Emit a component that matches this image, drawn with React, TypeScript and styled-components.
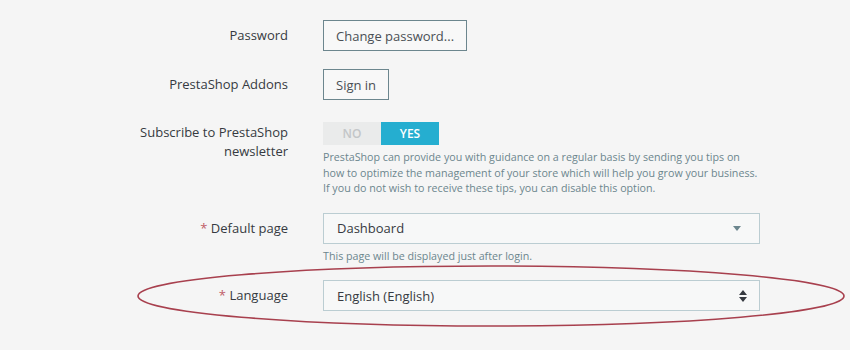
import React from 'react'
import styled, { createGlobalStyle } from 'styled-components'

const GlobalStyle = createGlobalStyle`
  html, body {
    margin: 0;
    padding: 0;
    background: #f5f5f5;
  }
  body {
    font-family: 'Open Sans', 'Liberation Sans', sans-serif;
    color: #363a41;
  }
`

type RowProps = { $gap: number }

const App: React.FunctionComponent = () => {
  return (
    <StyledPage>
      <GlobalStyle />
      <StyledForm>
        <StyledRow $gap={18}>
          <StyledLabel $top={0}>Password</StyledLabel>
          <StyledControl>
            <StyledButton>Change password...</StyledButton>
          </StyledControl>
        </StyledRow>

        <StyledRow $gap={22}>
          <StyledLabel $top={0}>PrestaShop Addons</StyledLabel>
          <StyledControl>
            <StyledButton>Sign in</StyledButton>
          </StyledControl>
        </StyledRow>

        <StyledRow $gap={16}>
          <StyledLabel $top={1} $multi>
            Subscribe to PrestaShop
            <br />
            newsletter
          </StyledLabel>
          <StyledControl>
            <StyledSwitch>
              <StyledSwitchOption>NO</StyledSwitchOption>
              <StyledSwitchOption $active>YES</StyledSwitchOption>
            </StyledSwitch>
            <StyledHelp $top={5}>
              PrestaShop can provide you with guidance on a regular basis by sending you tips on
              <br />
              how to optimize the management of your store which will help you grow your business.
              <br />
              If you do not wish to receive these tips, you can disable this option.
            </StyledHelp>
          </StyledControl>
        </StyledRow>

        <StyledRow $gap={16}>
          <StyledLabel $top={0}>
            <StyledRequired>*</StyledRequired> Default page
          </StyledLabel>
          <StyledControl>
            <StyledSelect>
              <span>Dashboard</span>
              <StyledCaret viewBox="0 0 8 5" width={8} height={5}>
                <path d="M0 0h8L4 5z" fill="#6c868e" />
              </StyledCaret>
            </StyledSelect>
            <StyledHelp $top={5}>This page will be displayed just after login.</StyledHelp>
          </StyledControl>
        </StyledRow>

        <StyledRow $gap={0}>
          <StyledLabel $top={0}>
            <StyledRequired>*</StyledRequired> Language
          </StyledLabel>
          <StyledControl>
            <StyledSelect>
              <span>English (English)</span>
              <StyledSortIcon viewBox="0 0 8 12" width={8} height={12}>
                <path d="M0 5h8L4 0z M0 7h8L4 12z" fill="#363a41" />
              </StyledSortIcon>
            </StyledSelect>
          </StyledControl>
        </StyledRow>
      </StyledForm>

      <StyledAnnotation viewBox="0 0 850 350" width={850} height={350}>
        <ellipse
          cx={491}
          cy={296}
          rx={353}
          ry={30}
          fill="none"
          stroke="#a8404e"
          strokeWidth={1.6}
        />
      </StyledAnnotation>
    </StyledPage>
  )
}

const StyledPage = styled('div')`
  position: relative;
  width: 850px;
  height: 350px;
  overflow: hidden;
  background: #f5f5f5;
`

const StyledForm = styled('div')`
  display: flex;
  flex-direction: column;
  padding-top: 20px;
`

const StyledRow = styled('div')<RowProps>`
  display: grid;
  grid-template-columns: 288px 436px;
  column-gap: 35px;
  margin-bottom: ${(p) => p.$gap}px;
`

const StyledLabel = styled('div')<{ $top: number; $multi?: boolean }>`
  text-align: right;
  font-size: 13px;
  color: #363a41;
  padding-top: ${(p) => p.$top}px;
  line-height: ${(p) => (p.$multi ? '19px' : '30px')};
`

const StyledRequired = styled('span')`
  color: #c05c67;
`

const StyledControl = styled('div')`
  display: flex;
  flex-direction: column;
  align-items: flex-start;
`

const StyledButton = styled('button')`
  height: 31px;
  padding: 0 12px;
  border: 1px solid #6c868e;
  border-radius: 0;
  background: #f8f8f8;
  color: #4a4f55;
  font-family: 'Open Sans', 'Liberation Sans', sans-serif;
  font-size: 13px;
  cursor: pointer;
`

const StyledSwitch = styled('div')`
  display: flex;
  height: 23px;
`

const StyledSwitchOption = styled('span')<{ $active?: boolean }>`
  width: 58px;
  display: flex;
  align-items: center;
  justify-content: center;
  font-size: 12px;
  font-weight: 600;
  background: ${(p) => (p.$active ? '#25aed0' : '#eaebeb')};
  color: ${(p) => (p.$active ? '#ffffff' : '#c3c6c8')};
`

const StyledHelp = styled('div')<{ $top: number }>`
  margin-top: ${(p) => p.$top}px;
  font-size: 10.7px;
  line-height: 15.5px;
  color: #6c868e;
`

const StyledSelect = styled('div')`
  box-sizing: border-box;
  width: 437px;
  height: 31px;
  display: flex;
  align-items: center;
  justify-content: space-between;
  padding: 0 14px 0 13px;
  border: 1px solid #bbcdd2;
  background: #f7f8f8;
  font-size: 13px;
  color: #363a41;
`

const StyledCaret = styled('svg')`
  margin-right: 4px;
`

const StyledSortIcon = styled('svg')`
  margin-right: -2px;
`

const StyledAnnotation = styled('svg')`
  position: absolute;
  left: 0;
  top: 0;
  pointer-events: none;
`

export default App
